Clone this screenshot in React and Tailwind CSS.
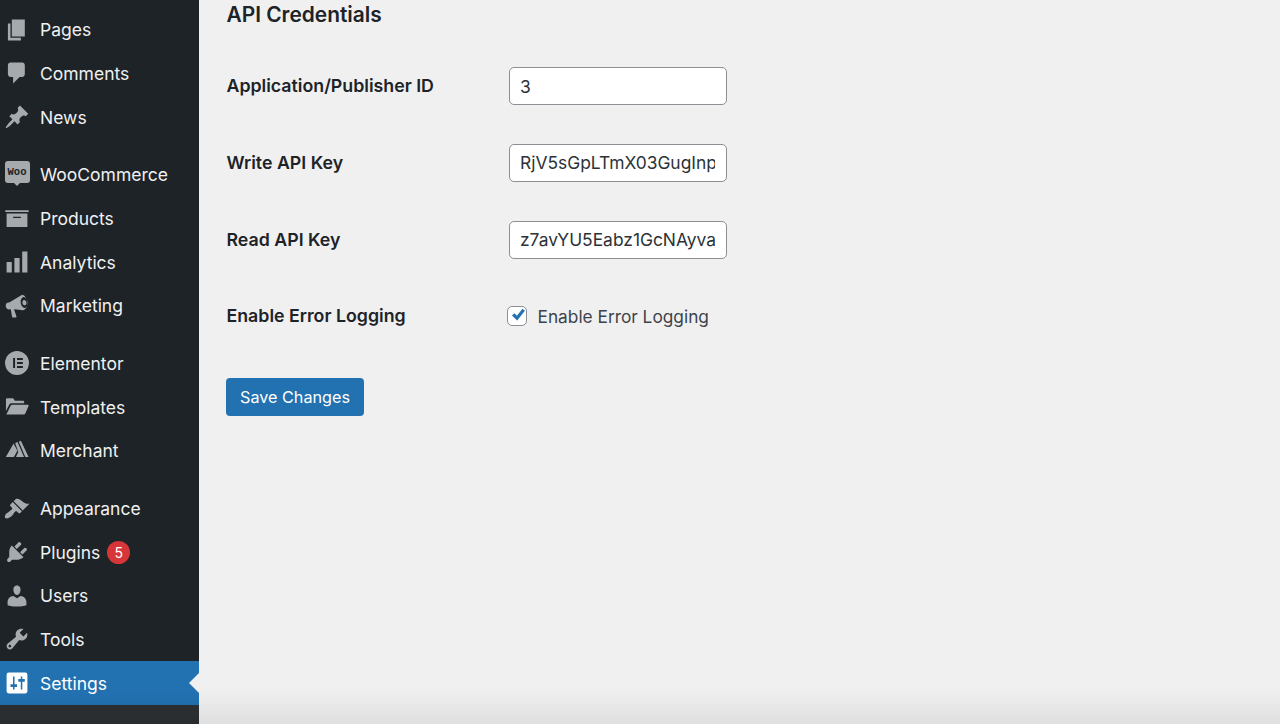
const PagesIcon = () => <path d="M6 15V2h10v13H6zm-1 1h8v2H3V5h2v11z" />;
const CommentsIcon = () => (
  <path d="M5 2h9c1.1 0 2 .9 2 2v7c0 1.1-.9 2-2 2h-2l-5 5v-5H5c-1.1 0-2-.9-2-2V4c0-1.1.9-2 2-2z" />
);
const PinIcon = () => (
  <path d="M10.44 3.02l1.82-1.82 6.36 6.35-1.83 1.82c-1.05-.68-2.48-.57-3.41.36l-.75.75c-.92.93-1.04 2.35-.35 3.41l-1.83 1.82-2.41-2.41-2.8 2.79c-.42.42-3.38 2.71-3.8 2.29s1.86-3.39 2.28-3.81l2.79-2.79L4.1 9.36l1.83-1.82c1.05.69 2.48.57 3.4-.36l.75-.75c.93-.92 1.05-2.35.36-3.41z" />
);
const ArchiveIcon = () => (
  <path fillRule="evenodd" d="M19 4v1.4H1V4h18zM2 6.6h16V17H2V6.6zm11 3.4V9H7v1h6z" />
);
const ChartIcon = () => <path d="M18 18V2h-4v16h4zm-6 0V7H8v11h4zm-6 0v-8H2v8h4z" />;
const MegaphoneIcon = () => (
  <path
    fillRule="evenodd"
    d="M14.4 1.4c-.5 0-1 .2-1.4.5L4 7.4H3.2C1.8 7.8 1 9.1 1.4 10.6c.3 1.3 1.4 2.1 2.6 2l1.2-.1 1 5.7c.1.4.3.6.7.6h2.2c.4 0 .6-.3.5-.7l-1.9-5.6 5.5.6c.5.2 1 .2 1.6.1 2.4-.6 3.7-3.5 3-6.6-.6-3-2.3-5.2-3.9-5.2zm.7 1.7c1.4.2 2.6 1.7 3 3.7.4 2.1-.3 4-1.6 4.6-.2.1-.4.2-.6.2-1.4-.2-2.6-1.7-3-3.7-.4-2.1.3-4 1.6-4.6.2-.1.4-.2.6-.2zm.2 2.2c-.9.2-1.3 1.2-1.1 2.4.2 1.1 1 1.9 1.9 1.8.9-.2 1.3-1.2 1.1-2.4-.2-1.1-1-1.9-1.9-1.8z"
  />
);
const ElementorIcon = () => (
  <path
    fillRule="evenodd"
    d="M10 .8a9.2 9.2 0 1 0 0 18.4A9.2 9.2 0 0 0 10 .8zM7 6.2h1.5v7.6H7V6.2zm3 0h4.5v1.5H10V6.2zm0 3h4.5v1.5H10V9.2zm0 3.1h4.5v1.5H10v-1.5z"
  />
);
const FolderIcon = () => (
  <path d="M1.5 4.2c0-.6.4-1 1-1h4c.4 0 .7.2.9.5l.9 1.5h6.2c.6 0 1 .4 1 1v1H6c-1 0-1.7.4-2.1 1.2L1.5 13V4.2zM5.2 8.8c.2-.4.5-.6 1-.6h12c.6 0 .9.5.7 1l-2.6 6c-.2.4-.5.6-1 .6H1.8l3.4-7z" />
);
const MerchantIcon = () => (
  <path d="M7.4 4.2l2.9 5.6-2.7 4.8H1.4L7.4 4.2zM8.6 3.8l1.8-.8 5 11.6H9.2l1.8-3.8-2.4-7zM11.4 2.8l1.6-.6 5.9 12.4h-2.5L11.4 2.8z" />
);
const BrushIcon = () => (
  <path d="M14.48 11.06L7.41 3.99l1.5-1.5c.5-.56 2.3-.47 3.51.32 1.21.8 1.43 1.28 2.91 2.1 1.18.64 2.45 1.26 4.45.85zm-.71.71L6.7 4.7 4.93 6.47c-.39.39-.39 1.02 0 1.41l1.06 1.06c.39.39.39 1.03 0 1.42-.6.6-1.43 1.11-2.21 1.69-.35.26-.7.53-1.01.84C1.43 13.23 0 15.71 1 17c1.29 1 3.77-.43 5.1-1.77.31-.31.58-.66.84-1.01.58-.78 1.09-1.61 1.69-2.21.39-.39 1.03-.39 1.42 0l1.06 1.06c.39.39 1.02.39 1.41 0z" />
);
const PlugIcon = () => (
  <path d="M13.11 4.36L9.87 7.6 8 5.73l3.24-3.24c.35-.34 1.05-.2 1.56.32.52.51.66 1.21.31 1.55zm-8 1.77l.91-1.12 9.01 9.01-1.19.84c-.71.71-2.63 1.16-3.82 1.16H6.14L4.9 17.26c-.59.59-1.54.59-2.12 0-.59-.58-.59-1.53 0-2.12l1.24-1.24v-3.88c0-1.13.4-3.19 1.09-3.89zm7.26 3.97l3.24-3.24c.34-.35 1.04-.21 1.55.31.52.51.66 1.21.31 1.55l-3.24 3.25z" />
);
const UsersIcon = () => (
  <path d="M10 9.25c-2.27 0-2.73-3.44-2.73-3.44C7 4.02 7.82 2 9.97 2c2.16 0 2.98 2.02 2.71 3.81 0 0-.41 3.44-2.68 3.44zm0 2.57L12.72 10c2.39 0 4.52 2.33 4.52 4.53v2.49s-3.65 1.13-7.24 1.13c-3.65 0-7.24-1.13-7.24-1.13v-2.49c0-2.25 1.94-4.48 4.47-4.48z" />
);
const ToolsIcon = () => (
  <path
    fillRule="evenodd"
    d="M16.68 9.77c-1.34 1.34-3.3 1.67-4.95.99l-5.41 6.52c-.99.99-2.59.99-3.58 0s-.99-2.59 0-3.57l6.52-5.42c-.68-1.65-.35-3.61.99-4.95 1.28-1.28 3.12-1.62 4.72-1.06l-2.89 2.89 2.82 2.82 2.86-2.87c.53 1.58.18 3.39-1.08 4.65zM3.81 16.21c.4.39 1.04.39 1.43 0 .4-.4.4-1.04 0-1.43-.39-.4-1.03-.4-1.43 0-.39.39-.39 1.03 0 1.43z"
  />
);
const SettingsIcon = () => (
  <>
    <rect x="2" y="2" width="16" height="16" rx="1.6" />
    <path
      className="fill-[#2271b1]"
      d="M6.9 5h1.2v6H10v2H8.1v2H6.9v-2H5v-2h1.9V5zM12.9 5h1.2v2H16v2h-1.9v6h-1.2V9H11V7h1.9V5z"
    />
  </>
);

const WooIcon = () => (
  <span className="flex -translate-y-[1px] flex-col items-center">
    <span className="flex h-[22px] w-[25px] items-center justify-center rounded-[3px] bg-[#a7aaad] font-['Liberation_Mono',monospace] text-[10.5px] font-bold leading-none text-[#1d2327]">
      Woo
    </span>
    <span className="h-0 w-0 border-x-[3px] border-t-[3px] border-x-transparent border-t-[#a7aaad]" />
  </span>
);

const menuGroups = [
  [
    { label: "Pages", icon: PagesIcon },
    { label: "Comments", icon: CommentsIcon },
    { label: "News", icon: PinIcon },
  ],
  [
    { label: "WooCommerce", icon: WooIcon, html: true },
    { label: "Products", icon: ArchiveIcon },
    { label: "Analytics", icon: ChartIcon },
    { label: "Marketing", icon: MegaphoneIcon },
  ],
  [
    { label: "Elementor", icon: ElementorIcon },
    { label: "Templates", icon: FolderIcon },
    { label: "Merchant", icon: MerchantIcon },
  ],
  [
    { label: "Appearance", icon: BrushIcon },
    { label: "Plugins", icon: PlugIcon, badge: 5 },
    { label: "Users", icon: UsersIcon },
    { label: "Tools", icon: ToolsIcon },
    { label: "Settings", icon: SettingsIcon, active: true },
  ],
];

const MenuItem = ({ item }) => {
  const Icon = item.icon;
  return (
    <a
      href="#"
      className={`relative flex h-[43.65px] items-center pl-[4px] ${
        item.active ? "bg-[#2271b1] text-white" : "text-[#f0f0f1]"
      }`}
    >
      <span className="flex w-[26px] shrink-0 items-center justify-center">
        {item.html ? (
          <Icon />
        ) : (
          <svg
            viewBox="0 0 20 20"
            className={`h-[26px] w-[26px] ${
              item.active ? "fill-white" : "fill-[#a7aaad]"
            }`}
          >
            <Icon />
          </svg>
        )}
      </span>
      <span className="ml-[10px] pt-[1.5px] text-[17.5px]">{item.label}</span>
      {item.badge && (
        <span className="ml-[7px] flex h-[23px] w-[23px] items-center justify-center rounded-full bg-[#d63638] text-[14px] text-white">
          {item.badge}
        </span>
      )}
      {item.active && (
        <span className="absolute right-0 top-1/2 h-0 w-0 -translate-y-1/2 border-y-[10px] border-r-[10px] border-y-transparent border-r-[#f0f0f1]" />
      )}
    </a>
  );
};

const Field = ({ label, value }) => (
  <div className="grid h-[76.8px] grid-cols-[282px_218px] items-start">
    <label className="pt-[6px] text-[17.75px] font-semibold text-[#1d2327]">{label}</label>
    <input
      type="text"
      readOnly
      value={value}
      className="h-[38px] w-[218px] rounded-[5px] border border-[#8c8f94] bg-white px-[10.5px] text-[17.4px] text-[#2c3338] outline-none"
    />
  </div>
);

export default function App() {
  return (
    <div className="relative flex h-[724px] overflow-hidden bg-[#f0f0f1] font-['Inter',sans-serif]">
      <aside className="flex w-[199px] shrink-0 flex-col bg-[#1d2327] pt-[8px]">
        <div className="flex flex-col gap-[14.1px]">
          {menuGroups.map((group, i) => (
            <nav key={i} className="flex flex-col">
              {group.map((item) => (
                <MenuItem key={item.label} item={item} />
              ))}
            </nav>
          ))}
        </div>
        <div className="flex-1 bg-[#2c3033]" />
      </aside>

      <main className="flex-1 pl-[27.5px]">
        <h2 className="mb-[37px] text-[20.9px] font-semibold leading-[30px] text-[#1d2327]">
          API Credentials
        </h2>
        <form>
          <Field label="Application/Publisher ID" value="3" />
          <Field label="Write API Key" value="RjV5sGpLTmX03GugInpQk7sLw2" />
          <Field label="Read API Key" value="z7avYU5Eabz1GcNAyva" />
          <div className="grid h-[81px] grid-cols-[280.5px_1fr] items-start pt-[4.5px]">
            <span className="text-[17.75px] font-semibold leading-[27px] text-[#1d2327]">
              Enable Error Logging
            </span>
            <label className="flex items-center text-[17.3px] leading-[27px] text-[#3c434a]">
              <span className="relative flex h-[20px] w-[20px] items-center justify-center">
                <input
                  type="checkbox"
                  defaultChecked
                  className="h-[20px] w-[20px] appearance-none rounded-[5px] border border-[#8c8f94] bg-white"
                />
                <svg
                  viewBox="0 0 20 20"
                  className="pointer-events-none absolute -right-[1px] -top-[1px] h-[20px] w-[20px] fill-[#2271b1]"
                >
                  <path d="M4 10.5l2.3-2.3 2.6 2.6 5.6-7 2.4 1.9L9.2 15.6z" />
                </svg>
              </span>
              <span className="ml-[10.5px] pt-[1px]">Enable Error Logging</span>
            </label>
          </div>
          <button
            type="button"
            className="-ml-[0.5px] h-[38px] w-[138px] rounded-[4px] bg-[#2271b1] text-[16.2px] text-white"
          >
            Save Changes
          </button>
        </form>
      </main>

      <div className="pointer-events-none absolute inset-x-0 bottom-0 h-[36px] bg-gradient-to-b from-transparent to-black/[0.07]" />
    </div>
  );
}
